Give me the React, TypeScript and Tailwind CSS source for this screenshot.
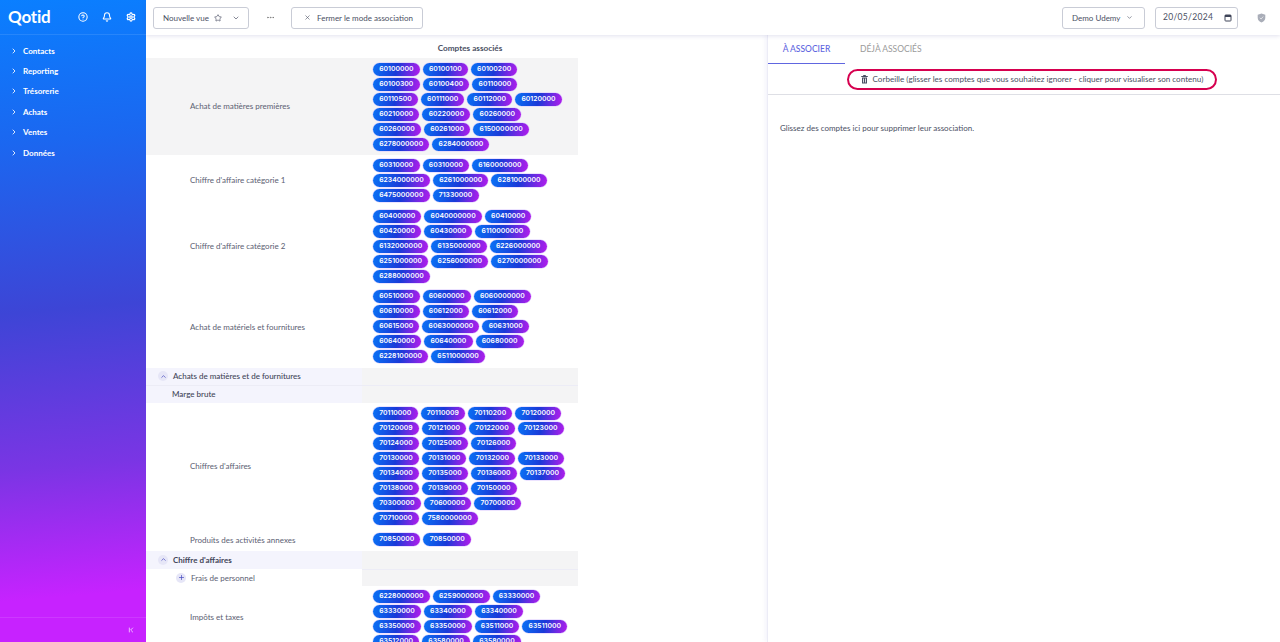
import React from "react";
import { CircleHelp, Bell, Settings, Star, ChevronDown, X, Ellipsis, ChevronRight, ChevronUp, Plus, ChevronFirst } from "lucide-react";

const nav = ["Contacts", "Reporting", "Trésorerie", "Achats", "Ventes", "Données"];

function Pill({ t }: { t: string }) {
  return (
    <span className="h-[13px] px-[6.2px] rounded-full flex items-center text-white text-[6.85px] font-semibold font-['Inter',sans-serif] leading-none bg-[linear-gradient(100deg,#0a72f5_0%,#1a3ad8_50%,#b41cec_100%)] shadow-[0_0_0_0.5px_#d9c8ff]">
      {t}
    </span>
  );
}

function Lines({ rows }: { rows: string[][] }) {
  return (
    <div className="flex flex-col gap-[2px]">
      {rows.map((r, i) => (
        <div key={i} className="flex gap-[3px]">
          {r.map((t, j) => (
            <Pill key={j} t={t} />
          ))}
        </div>
      ))}
    </div>
  );
}

function Row({ label, rows, cls, bg, shift }: { label: string; rows: string[][]; cls: string; bg?: string; shift?: string }) {
  return (
    <div className={`flex items-center ${cls} ${bg ?? ""}`}>
      <div className="w-[216px] shrink-0 pl-[44px] pb-[1px] text-[8px] text-[#5b6072]">{label}</div>
      <div className={`pl-[11px] ${shift ?? "pb-[2px]"}`}>
        <Lines rows={rows} />
      </div>
    </div>
  );
}

export default function App() {
  return (
    <div className="flex h-[642px] w-[1280px] overflow-hidden bg-white font-['Lato',sans-serif] text-[#4a4f63]">
      <aside className="w-[146px] shrink-0 flex flex-col text-white bg-[linear-gradient(175deg,#0a7fff_0%,#1b67f0_22%,#3d45d6_48%,#7a35e4_72%,#c722ff_92%,#c722ff_100%)]">
        <div className="h-[35px] flex items-center pl-[8px] pr-[10px] border-b border-white/10">
          <span className="text-[17px] font-bold tracking-[-0.2px] w-[70px]">Qotid</span>
          <div className="flex items-center gap-[14px]">
            <CircleHelp size={10} strokeWidth={2.5} />
            <Bell size={10} strokeWidth={2.5} />
            <Settings size={10} strokeWidth={3} />
          </div>
        </div>
        <nav className="flex flex-col pt-[5.5px] pl-[10px]">
          {nav.map((n) => (
            <div key={n} className="h-[20.4px] flex items-center gap-[5px] text-[8px] font-bold">
              <ChevronRight size={8} strokeWidth={2.5} />
              <span>{n}</span>
            </div>
          ))}
        </nav>
        <div className="mt-auto h-[25px] border-t border-white/10 flex items-center justify-end pr-[11px]">
          <ChevronFirst size={8} strokeWidth={2.5} className="text-white/80" />
        </div>
      </aside>

      <div className="flex-1 flex flex-col min-w-0">
        <header className="relative z-10 h-[35px] shrink-0 bg-white flex items-center pl-[7px] pr-[14.5px] shadow-[0_1px_4px_rgba(90,90,160,0.18)]">
          <div className="h-[22px] w-[96px] border border-[#c9ccd6] rounded-[3px] flex items-center pl-[9px] gap-[5px] text-[8px]">
            <span>Nouvelle vue</span>
            <Star size={8} />
            <ChevronDown size={8} className="ml-[5px]" />
          </div>
          <Ellipsis size={9} className="ml-[16.5px] text-[#777]" />
          <div className="ml-[16.5px] h-[22px] w-[132px] border border-[#c9ccd6] rounded-[3px] flex items-center pl-[12px] gap-[6px] text-[8px]">
            <X size={7} strokeWidth={2} />
            <span>Fermer le mode association</span>
          </div>
          <div className="ml-auto h-[22px] w-[83px] border border-[#c9ccd6] rounded-[3px] flex items-center pl-[9px] gap-[6px] text-[8px]">
            <span>Demo Udemy</span>
            <ChevronDown size={7} />
          </div>
          <div className="ml-[10px] h-[22px] w-[83px] border border-[#c9ccd6] rounded-[3px] flex items-center pl-[7px] gap-[11px] text-[8.5px] tracking-[0.3px]">
            <span>20/05/2024</span>
            <svg width="8" height="8" viewBox="0 0 8 8" className="text-[#3f4458]">
              <rect x="1" y="1" width="6" height="6" rx="0.7" fill="none" stroke="currentColor" strokeWidth="1" />
              <rect x="1" y="1" width="6" height="2" fill="currentColor" />
            </svg>
          </div>
          <svg width="9" height="10" viewBox="0 0 9 10" className="ml-[18.5px] text-[#a9adb8]">
            <path d="M4.5 0.5 L8.3 1.8 V5 C8.3 7.3 6.5 8.8 4.5 9.5 C2.5 8.8 0.7 7.3 0.7 5 V1.8 Z" fill="currentColor" />
            <path d="M2.8 4.8 L4.1 6 L6.2 3.6" fill="none" stroke="#e4e5ea" strokeWidth="0.9" />
          </svg>
        </header>

        <div className="flex-1 flex min-h-0">
          <main className="w-[621px] shrink-0 overflow-hidden">
            <div className="w-[432px]">
              <div className="h-[23px] pt-[4px] flex items-center justify-center pl-[216px] text-[8.2px] font-bold text-[#4a4f63] leading-none">
                Comptes associés
              </div>
              <Row
                label="Achat de matières premières"
                cls="h-[97px]"
                bg="bg-[#f4f4f5]"
                shift="pb-0"
                rows={[
                  ["60100000", "60100100", "60100200"],
                  ["60100300", "60100400", "60110000"],
                  ["60110500", "60111000", "60112000", "60120000"],
                  ["60210000", "60220000", "60260000"],
                  ["60260000", "60261000", "6150000000"],
                  ["6278000000", "6284000000"],
                ]}
              />
              <Row
                label="Chiffre d'affaire catégorie 1"
                cls="h-[51px]"
                shift="pb-0"
                rows={[
                  ["60310000", "60310000", "6160000000"],
                  ["6234000000", "6261000000", "6281000000"],
                  ["6475000000", "71330000"],
                ]}
              />
              <Row
                label="Chiffre d'affaire catégorie 2"
                cls="h-[81px]"
                shift="pb-0"
                rows={[
                  ["60400000", "6040000000", "60410000"],
                  ["60420000", "60430000", "6110000000"],
                  ["6132000000", "6135000000", "6226000000"],
                  ["6251000000", "6256000000", "6270000000"],
                  ["6288000000"],
                ]}
              />
              <Row
                label="Achat de matériels et fournitures"
                cls="h-[81px]"
                rows={[
                  ["60510000", "60600000", "6060000000"],
                  ["60610000", "60612000", "60612000"],
                  ["60615000", "6063000000", "60631000"],
                  ["60640000", "60640000", "60680000"],
                  ["6228100000", "6511000000"],
                ]}
              />
              <div className="h-[17px] flex items-center">
                <div className="w-[216px] h-full bg-[#f4f4fd] flex items-center pl-[12px] pb-[1px] gap-[5px] text-[8px] font-medium text-[#3f4458]">
                  <span className="w-[10px] h-[10px] rounded-full bg-[#e6e6f7] flex items-center justify-center text-[#4a4fc0]">
                    <ChevronUp size={7} strokeWidth={2.5} />
                  </span>
                  Achats de matières et de fournitures
                </div>
                <div className="flex-1 h-full bg-[#f4f4f5]" />
              </div>
              <div className="h-[18px] flex items-center border-t border-[#ececf6]">
                <div className="w-[216px] h-full bg-[#f4f4fd] flex items-center pl-[26px] pb-[1px] text-[8px] font-medium text-[#3f4458]">
                  Marge brute
                </div>
                <div className="flex-1 h-full bg-[#f4f4f5]" />
              </div>
              <Row
                label="Chiffres d'affaires"
                cls="h-[127px]"
                rows={[
                  ["70110000", "70110009", "70110200", "70120000"],
                  ["70120009", "70121000", "70122000", "70123000"],
                  ["70124000", "70125000", "70126000"],
                  ["70130000", "70131000", "70132000", "70133000"],
                  ["70134000", "70135000", "70136000", "70137000"],
                  ["70138000", "70139000", "70150000"],
                  ["70300000", "70600000", "70700000"],
                  ["70710000", "7580000000"],
                ]}
              />
              <Row label="Produits des activités annexes" cls="h-[21px]" shift="pb-[3px]" rows={[["70850000", "70850000"]]} />
              <div className="h-[18px] flex items-center">
                <div className="w-[216px] h-full bg-[#f4f4fd] flex items-center pl-[12px] pb-[1px] gap-[5px] text-[8px] font-bold text-[#3f4458]">
                  <span className="w-[10px] h-[10px] rounded-full bg-[#e6e6f7] flex items-center justify-center text-[#4a4fc0]">
                    <ChevronUp size={7} strokeWidth={2.5} />
                  </span>
                  Chiffre d'affaires
                </div>
                <div className="flex-1 h-full bg-[#f4f4f5]" />
              </div>
              <div className="h-[17px] flex items-center">
                <div className="w-[216px] h-full flex items-center pl-[30px] gap-[5px] text-[8px] text-[#5b6072]">
                  <span className="w-[10px] h-[10px] rounded-full bg-[#e6e6f7] flex items-center justify-center text-[#4a4fc0]">
                    <Plus size={7} strokeWidth={2.5} />
                  </span>
                  Frais de personnel
                </div>
                <div className="flex-1 h-full bg-[#f4f4f5] border-t border-[#ececf6]" />
              </div>
              <Row
                label="Impôts et taxes"
                cls="h-[63px]"
                shift="pt-[2px]"
                rows={[
                  ["6228000000", "6259000000", "63330000"],
                  ["63330000", "63340000", "63340000"],
                  ["63350000", "63350000", "63511000", "63511000"],
                  ["63512000", "63580000", "63580000"],
                ]}
              />
            </div>
          </main>

          <section className="flex-1 border-l border-[#ececf6] shadow-[-2px_0_4px_rgba(120,120,200,0.08)]">
            <div className="flex h-[29px]">
              <div className="w-[77px] h-full flex items-center justify-center text-[8.5px] font-medium text-[#6066e0] border-b-[1.5px] border-[#6066e0]">
                À ASSOCIER
              </div>
              <div className="ml-[15px] flex items-center text-[8.5px] text-[#9a9a9a]">DÉJÀ ASSOCIÉS</div>
            </div>
            <div className="h-[31px] border-b border-[#dedfe5] flex items-center justify-center pl-[16px]">
              <div className="h-[21px] w-[370px] rounded-full border-2 border-[#d6004f] flex items-center justify-center gap-[5px] text-[8.1px]">
                <svg width="7" height="9" viewBox="0 0 7 9" className="text-[#4a4f63]">
                  <rect x="0.2" y="1" width="6.6" height="1" fill="currentColor" />
                  <rect x="2.2" y="0" width="2.6" height="1" fill="currentColor" />
                  <path d="M1 2.6 H6 V8.4 H1 Z M2 3.6 V7.6 H2.8 V3.6 Z M4.2 3.6 V7.6 H5 V3.6 Z" fill="currentColor" fillRule="evenodd" />
                </svg>
                Corbeille (glisser les comptes que vous souhaitez ignorer - cliquer pour visualiser son contenu)
              </div>
            </div>
            <p className="pl-[12px] pt-[28px] text-[8px] leading-[10px]">Glissez des comptes ici pour supprimer leur association.</p>
          </section>
        </div>
      </div>
    </div>
  );
}
